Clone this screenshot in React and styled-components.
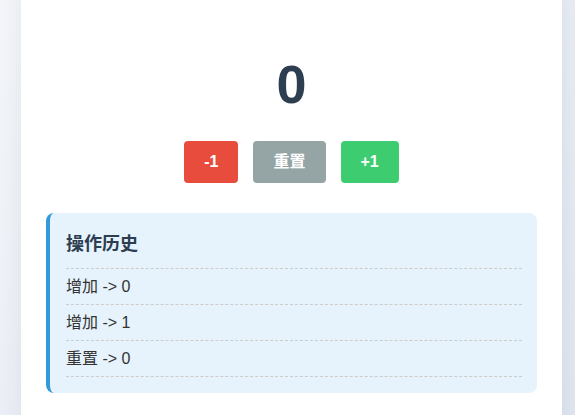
import React, { useState } from "react";
import styled, { createGlobalStyle } from "styled-components";

const GlobalStyle = createGlobalStyle`
  html, body {
    margin: 0;
    padding: 0;
  }
  body {
    min-height: 100vh;
    overflow: hidden;
    background: linear-gradient(135deg, #f3f5f9 0%, #dfe5ef 100%);
    font-family: "Liberation Sans", "Noto Sans CJK SC", sans-serif;
  }
`

const Page = styled.div`
  padding: 0 13px 0 21px;
`

const Card = styled.div`
  margin-top: -20px;
  background: #fff;
  border-radius: 12px;
  box-shadow: 0 4px 20px rgba(40, 60, 90, 0.08);
  padding: 77px 25px 40px;
  display: flex;
  flex-direction: column;
  align-items: center;
`

const Count = styled.div`
  font-size: 54px;
  line-height: 1;
  font-weight: bold;
  color: #2c3e50;
`

const Controls = styled.div`
  display: flex;
  gap: 15px;
  margin-top: 30px;
`

const Button = styled.button`
  border: none;
  border-radius: 4px;
  padding: 12px 20px;
  font-family: "Liberation Sans", "Noto Sans CJK SC", sans-serif;
  font-size: 16px;
  font-weight: bold;
  line-height: 18px;
  color: #fff;
  background: ${(p) => p.$color};
  cursor: pointer;
`

const History = styled.div`
  align-self: stretch;
  margin-top: 30px;
  background: #e6f3fc;
  border-left: 4px solid #3498db;
  border-radius: 8px;
  padding: 15px 15px 16px 16px;
  font-family: "Liberation Sans", "Noto Sans CJK SC", sans-serif;
`

const Title = styled.h3`
  margin: 0;
  padding: 3px 0 11px;
  font-size: 18px;
  line-height: 26px;
  color: #2c3e50;
  border-bottom: 1px dashed #ccc;
`

const List = styled.ul`
  list-style: none;
  margin: 0;
  padding: 0;
`

const Item = styled.li`
  padding: 6px 0;
  font-size: 16px;
  line-height: 23px;
  color: #333;
  border-bottom: 1px dashed #ccc;
`

export default function App() {
  const [count, setCount] = useState(0);
  const [history, setHistory] = useState([
    "增加 -> 0",
    "增加 -> 1",
    "重置 -> 0",
  ]);

  const change = (label, value) => {
    setCount(value);
    setHistory((h) => [...h, `${label} -> ${value}`]);
  };

  return (
    <Page>
      <GlobalStyle />
      <Card>
        <Count>{count}</Count>
        <Controls>
          <Button $color="#e74c3c" onClick={() => change("减少", count - 1)}>-1</Button>
          <Button $color="#95a5a6" onClick={() => change("重置", 0)}>重置</Button>
          <Button $color="#3ecc71" onClick={() => change("增加", count + 1)}>+1</Button>
        </Controls>
        <History>
          <Title>操作历史</Title>
          <List>
            {history.map((entry, i) => (
              <Item key={i}>{entry}</Item>
            ))}
          </List>
        </History>
      </Card>
    </Page>
  );
}
